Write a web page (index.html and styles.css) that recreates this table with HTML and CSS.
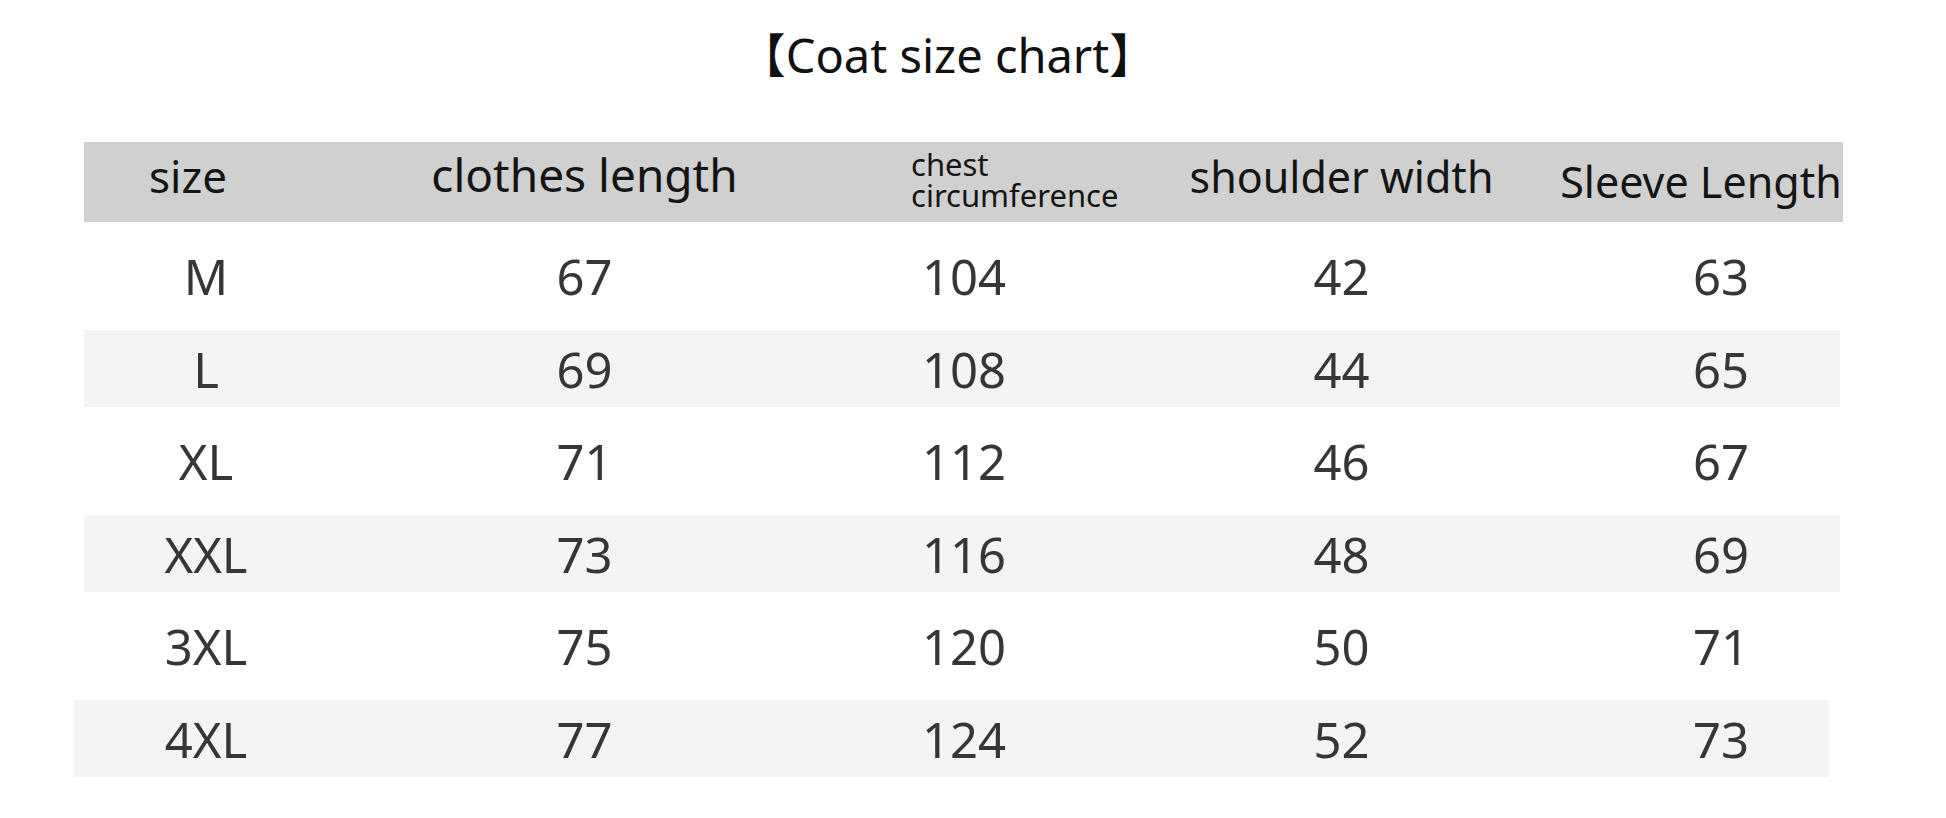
FILE: index.html
```html
<!DOCTYPE html>
<html lang="en">
<head>
<meta charset="utf-8">
<title>Coat size chart</title>
<link rel="stylesheet" href="styles.css">
</head>
<body>
<div class="page">
  <h1 class="title">【Coat size chart】</h1>
  <div class="chart">
    <div class="row head">
      <div class="cell h-size">size</div>
      <div class="cell h-clothes">clothes length</div>
      <div class="cell h-chest">chest<br>circumference</div>
      <div class="cell h-shoulder">shoulder width</div>
      <div class="cell h-sleeve">Sleeve Length</div>
    </div>
    <div class="row">
      <div class="cell">M</div><div class="cell">67</div><div class="cell">104</div><div class="cell">42</div><div class="cell">63</div>
    </div>
    <div class="row band">
      <div class="cell">L</div><div class="cell">69</div><div class="cell">108</div><div class="cell">44</div><div class="cell">65</div>
    </div>
    <div class="row">
      <div class="cell">XL</div><div class="cell">71</div><div class="cell">112</div><div class="cell">46</div><div class="cell">67</div>
    </div>
    <div class="row band">
      <div class="cell">XXL</div><div class="cell">73</div><div class="cell">116</div><div class="cell">48</div><div class="cell">69</div>
    </div>
    <div class="row">
      <div class="cell">3XL</div><div class="cell">75</div><div class="cell">120</div><div class="cell">50</div><div class="cell">71</div>
    </div>
    <div class="row band band-shift">
      <div class="cell">4XL</div><div class="cell">77</div><div class="cell">124</div><div class="cell">52</div><div class="cell">73</div>
    </div>
  </div>
</div>
</body>
</html>
```

FILE: styles.css
```css
html, body {
  margin: 0;
  padding: 0;
  background: #ffffff;
}

body {
  font-family: "Noto Sans", "Noto Sans CJK SC", sans-serif;
  color: #333333;
}

.page {
  width: 1946px;
  height: 818px;
  overflow: hidden;
}

.title {
  box-sizing: border-box;
  height: 142px;
  margin: 0;
  padding: 25px 51px 0 0;
  font-size: 47px;
  line-height: 60px;
  font-weight: 400;
  color: #111111;
  text-align: center;
  white-space: nowrap;
}

.chart {
  display: flex;
  flex-direction: column;
  row-gap: 15.5px;
  margin-left: 84px;
}

.row {
  box-sizing: border-box;
  display: grid;
  grid-template-columns: 244px 513px 246px 509px 250px;
  align-items: center;
  width: 1756px;
  height: 77px;
  font-size: 49px;
  color: #363636;
}

.cell {
  justify-self: center;
  text-align: center;
  white-space: nowrap;
}

.band {
  background: #f4f4f4;
}

.band-shift {
  margin-left: -10px;
  padding-left: 10px;
  width: 1755px;
}

.head {
  width: 1759px;
  height: 80px;
  background: #cfd0cf;
  align-items: start;
  color: #141414;
  font-size: 43px;
  line-height: 1;
}

.h-size {
  font-size: 44px;
  padding-top: 12px;
  margin-right: 36px;
}

.h-clothes {
  font-size: 46px;
  padding-top: 9px;
}

.h-chest {
  justify-self: start;
  text-align: left;
  font-size: 31px;
  line-height: 31px;
  padding: 7px 0 0 70px;
}

.h-shoulder {
  padding-top: 13px;
}

.h-sleeve {
  font-size: 43px;
  padding-top: 18px;
  margin-right: 40px;
}
```
